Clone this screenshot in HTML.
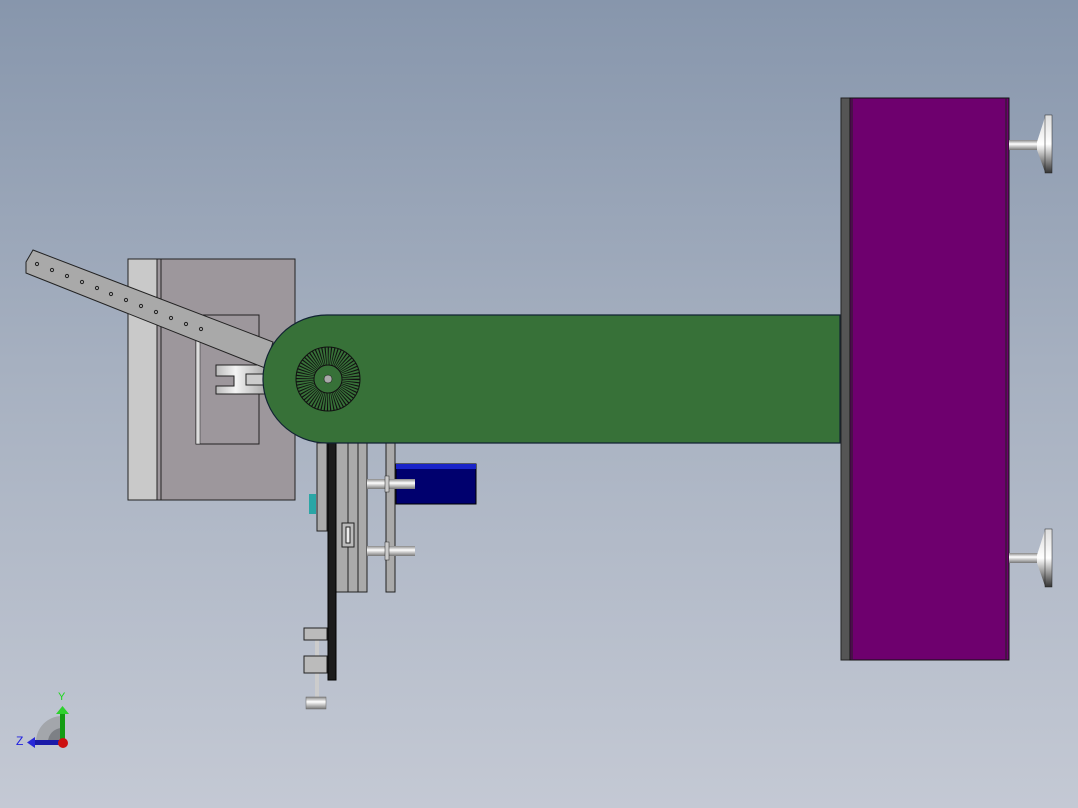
<!DOCTYPE html>
<html><head><meta charset="utf-8"><style>
html,body{margin:0;padding:0;width:1078px;height:808px;overflow:hidden}
body{background:linear-gradient(180deg,#8796ac 0%,#a6b0c0 45%,#c4c9d4 100%)}
svg{position:absolute;left:0;top:0}
</style></head><body>
<svg width="1078" height="808" viewBox="0 0 1078 808" xmlns="http://www.w3.org/2000/svg">
<defs>
<linearGradient id="cyl" x1="0" y1="0" x2="0" y2="1">
<stop offset="0" stop-color="#888"/><stop offset=".4" stop-color="#fff"/><stop offset="1" stop-color="#777"/></linearGradient>
<linearGradient id="disk" x1="0" y1="0" x2="0" y2="1">
<stop offset="0" stop-color="#ddd"/><stop offset=".5" stop-color="#fff"/><stop offset="1" stop-color="#333"/></linearGradient>
<linearGradient id="clev" x1="0" y1="0" x2="1" y2="0">
<stop offset="0" stop-color="#bbb"/><stop offset=".4" stop-color="#f4f4f4"/><stop offset="1" stop-color="#aaa"/></linearGradient>
</defs>
<!-- gray box -->
<rect x="128" y="259" width="167" height="241" fill="#9d979c" stroke="#222" stroke-width="1"/>
<rect x="128" y="259" width="29" height="241" fill="#c9c9c9" stroke="#222" stroke-width="1"/>
<line x1="161" y1="259" x2="161" y2="500" stroke="#222"/>
<rect x="196" y="315" width="63" height="129" fill="#9d979c" stroke="#222"/>
<rect x="196" y="315" width="4" height="129" fill="#ddd" stroke="#222" stroke-width=".5"/>
<!-- clevis -->
<path d="M216 365 H265 V394 H216 V386 H234 V376 H216 Z" fill="url(#clev)" stroke="#222"/>
<rect x="246" y="374" width="19" height="11" fill="#ccc" stroke="#222"/>
<!-- bar -->
<polygon points="33,250 273,342 265,368 26,273 26,262" fill="#a9a9a9" stroke="#222" stroke-width="1"/>
<g fill="none" stroke="#222" stroke-width="1">
<circle cx="37" cy="264" r="1.6"/><circle cx="52" cy="270" r="1.6"/><circle cx="67" cy="276" r="1.6"/><circle cx="82" cy="282" r="1.6"/><circle cx="97" cy="288" r="1.6"/><circle cx="111" cy="294" r="1.6"/><circle cx="126" cy="300" r="1.6"/><circle cx="141" cy="306" r="1.6"/><circle cx="156" cy="312" r="1.6"/><circle cx="171" cy="318" r="1.6"/><circle cx="186" cy="324" r="1.6"/><circle cx="201" cy="329" r="1.6"/>
</g>
<!-- plates below arm -->
<rect x="317" y="443" width="10" height="88" fill="#aaa" stroke="#222"/>
<rect x="309" y="494" width="7" height="20" fill="#2aa6a6"/>
<rect x="336" y="443" width="31" height="149" fill="#aaa" stroke="#222"/>
<line x1="348" y1="443" x2="348" y2="592" stroke="#222"/>
<line x1="358" y1="443" x2="358" y2="592" stroke="#222"/>
<rect x="342" y="523" width="12" height="24" fill="#bbb" stroke="#222"/>
<rect x="346" y="527" width="4" height="16" fill="#eee" stroke="#222"/>
<rect x="386" y="443" width="9" height="149" fill="#aaa" stroke="#222"/>
<rect x="328" y="443" width="8" height="237" fill="#1c1c1c" stroke="#000"/>
<!-- blue box -->
<rect x="396" y="464" width="80" height="40" fill="#00006e" stroke="#000"/>
<rect x="396" y="464" width="80" height="5" fill="#1a24c8"/>
<!-- pins -->
<rect x="367" y="479" width="48" height="10" fill="url(#cyl)"/>
<rect x="385" y="476" width="4" height="16" fill="#ccc" stroke="#222" stroke-width=".5"/>
<rect x="367" y="546" width="48" height="10" fill="url(#cyl)"/>
<rect x="385" y="542" width="4" height="18" fill="#ccc" stroke="#222" stroke-width=".5"/>
<!-- bottom clamps -->
<rect x="315" y="640" width="4" height="60" fill="#ccc"/>
<rect x="304" y="628" width="23" height="12" fill="#bbb" stroke="#222"/>
<rect x="304" y="656" width="23" height="17" fill="#bbb" stroke="#222"/>
<rect x="306" y="697" width="20" height="12" fill="url(#cyl)" stroke="#666" stroke-width=".5"/>
<!-- green arm -->
<path d="M327 315 H840 V443 H327 A64 64 0 0 1 327 315 Z" fill="#377138" stroke="#123" stroke-width="1.2"/>
<circle cx="328" cy="379" r="23" fill="none" stroke="#111" stroke-width="18" stroke-dasharray="0.9 1.5"/>
<circle cx="328" cy="379" r="32" fill="none" stroke="#111" stroke-width="1"/>
<circle cx="328" cy="379" r="14" fill="#377138" stroke="#111" stroke-width="1"/>
<circle cx="328" cy="379" r="4" fill="#aaa" stroke="#111" stroke-width=".5"/>
<!-- purple -->
<rect x="841" y="98" width="9" height="562" fill="#555" stroke="#222"/>
<rect x="850" y="98" width="159" height="562" fill="#6e006e" stroke="#111"/>
<line x1="852" y1="98" x2="852" y2="660" stroke="#222"/>
<line x1="1006" y1="98" x2="1006" y2="660" stroke="#222"/>
<!-- feet -->
<rect x="1009" y="140" width="30" height="10" fill="url(#cyl)"/>
<polygon points="1037,142 1045,117 1045,172 1037,150" fill="url(#disk)"/>
<rect x="1045" y="115" width="7" height="58" fill="url(#disk)" stroke="#222" stroke-width=".5"/>
<rect x="1009" y="553" width="30" height="10" fill="url(#cyl)"/>
<polygon points="1037,555 1045,530 1045,586 1037,563" fill="url(#disk)"/>
<rect x="1045" y="529" width="7" height="58" fill="url(#disk)" stroke="#222" stroke-width=".5"/>
<!-- triad -->
<path d="M36 742 A26 26 0 0 1 62 716 V742 Z" fill="#a3a6ab"/>
<path d="M48 742 A14 14 0 0 1 62 728 V742 Z" fill="#7d8085"/>
<rect x="60" y="712" width="5" height="30" fill="#139c13"/>
<polygon points="56,714 62.5,706 69,714" fill="#2ed12e"/>
<rect x="34" y="740" width="28" height="5" fill="#1a1aa8"/>
<polygon points="35,737 27,742.5 35,748" fill="#2828d8"/>
<circle cx="63" cy="743" r="5" fill="#cc1010"/>
<text x="58" y="700" font-family="Liberation Sans, sans-serif" font-size="11" fill="#1ad81a">Y</text>
<text x="16" y="745" font-family="Liberation Sans, sans-serif" font-size="12" fill="#2020e0">Z</text>
</svg>
</body></html>
